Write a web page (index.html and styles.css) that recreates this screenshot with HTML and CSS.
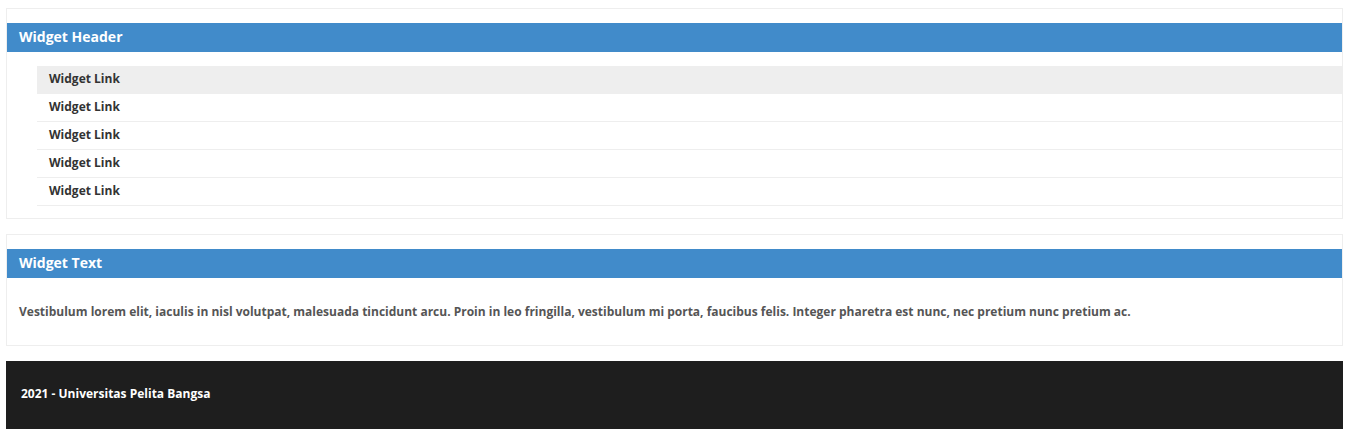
FILE: index.html
```html
<!DOCTYPE html>
<html>
<head>
<meta charset="utf-8">
<link rel="stylesheet" href="styles.css">
</head>
<body>
<div class="widget">
  <h3 class="widget-title">Widget Header</h3>
  <ul class="widget-list">
    <li class="active"><a href="#">Widget Link</a></li>
    <li><a href="#">Widget Link</a></li>
    <li><a href="#">Widget Link</a></li>
    <li><a href="#">Widget Link</a></li>
    <li><a href="#">Widget Link</a></li>
  </ul>
</div>
<div class="widget">
  <h3 class="widget-title">Widget Text</h3>
  <p class="widget-text">Vestibulum lorem elit, iaculis in nisl volutpat, malesuada tincidunt arcu. Proin in leo fringilla, vestibulum mi porta, faucibus felis. Integer pharetra est nunc, nec pretium nunc pretium ac.</p>
</div>
<footer class="footer">
  <p>2021 - Universitas Pelita Bangsa</p>
</footer>
</body>
</html>
```
FILE: styles.css
```css
html, body {
  margin: 0;
  padding: 0;
}
body {
  padding: 8px 6px 0;
  font-family: "Open Sans", "Liberation Sans", sans-serif;
  font-weight: 700;
  background: #fff;
}
.widget {
  border: 1px solid #eee;
  padding: 14px 0 12px;
  margin-bottom: 15px;
}
.widget-title {
  margin: 0;
  background: #418bca;
  color: #fff;
  font-size: 14px;
  font-weight: 700;
  height: 29px;
  line-height: 27px;
  padding: 0 12px;
}
.widget-list {
  list-style: none;
  margin: 14px 0 0 30px;
  padding: 0;
}
.widget-list li {
  height: 27px;
  line-height: 22px;
  border-bottom: 1px solid #eee;
  padding: 0 12px;
}
.widget-list li.active {
  background: #eee;
}
.widget-list a {
  color: #333;
  text-decoration: none;
  font-size: 12px;
}
.widget-text {
  margin: 0;
  padding: 26px 12px 13px;
  color: #555;
  font-size: 12px;
  line-height: 16px;
}
.footer {
  background: #1e1e1e;
  height: 68px;
  padding: 0 15px 4px;
  box-sizing: border-box;
  display: flex;
  align-items: center;
}
.footer p {
  margin: 0;
  color: #fff;
  font-size: 12px;
}
```
